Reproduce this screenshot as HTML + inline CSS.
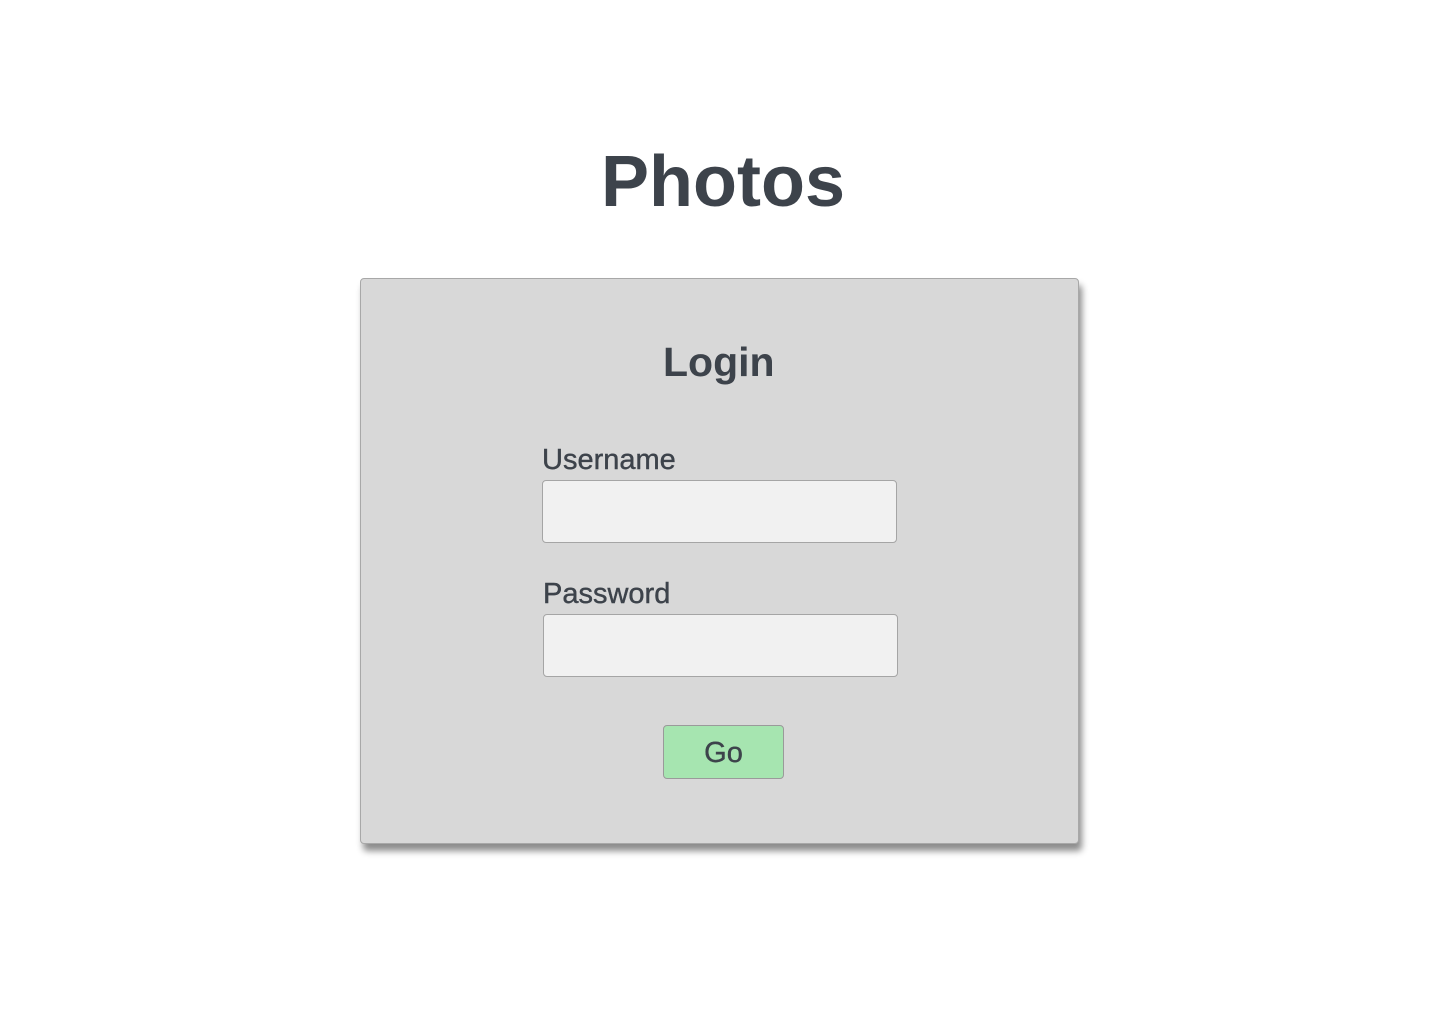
<!DOCTYPE html>
<html><head><meta charset="utf-8"><style>
body{margin:0;width:1440px;height:1024px;background:#fff;position:relative;font-family:"Liberation Sans",sans-serif;color:#3d434b;overflow:hidden}
.a{position:absolute;white-space:nowrap;line-height:1}
#card{position:absolute;left:360px;top:278px;width:717px;height:564px;background:#d8d8d8;border:1px solid #a8a8a8;border-radius:4px;box-shadow:3px 7px 7px rgba(0,0,0,.45)}
.in{position:absolute;width:353px;height:61px;background:#f1f1f1;border:1px solid #a5a5a5;border-radius:4px}
#go{position:absolute;left:663px;top:725px;width:119px;height:52px;background:#a6e5b0;border:1px solid #9a9a9a;border-radius:4px}
.l{font-size:29px;-webkit-text-stroke:0.4px #3d434b}
</style></head><body>
<div class="a" style="left:601px;top:146px;font-size:72px;font-weight:bold">Photos</div>
<div id="card"></div>
<div class="a" style="left:663px;top:342px;font-size:41px;font-weight:bold">Login</div>
<div class="a l" style="left:542px;top:446px">Username</div>
<div class="in" style="left:542px;top:480px"></div>
<div class="a l" style="left:543px;top:580px">Password</div>
<div class="in" style="left:543px;top:614px"></div>
<div id="go"></div>
<div class="a l" style="left:663px;width:121px;text-align:center;top:739px">Go</div>
</body></html>
